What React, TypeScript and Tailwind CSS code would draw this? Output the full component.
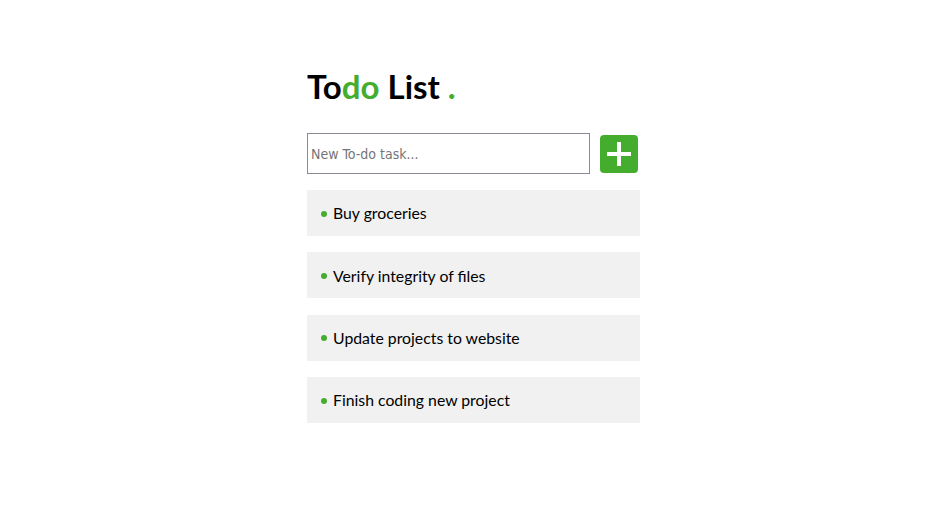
import React from 'react';

const tasks = [
  'Buy groceries',
  'Verify integrity of files',
  'Update projects to website',
  'Finish coding new project',
];

export default function App() {
  const [text, setText] = React.useState('');

  return (
    <div className="min-h-[529px] w-full bg-white font-['Lato',sans-serif]">
      <div className="mx-auto w-[333px] pt-[64px] translate-x-[4px]">
        <h1 className="text-[33px] leading-[44px] font-bold text-black">
          To<span className="text-[#44ad2e]">do</span> List <span className="text-[#44ad2e]">.</span>
        </h1>
        <div className="mt-[25px] flex items-center">
          <input
            type="text"
            value={text}
            onChange={e => setText(e.target.value)}
            placeholder="New To-do task..."
            className="w-[283px] h-[41px] border border-[#8a8a96] px-[3px] text-[14px] font-['DejaVu_Sans_Condensed','DejaVu_Sans',sans-serif] text-black placeholder:text-[#757575] outline-none"
          />
          <button className="ml-[10px] mt-[1px] w-[38px] h-[38px] rounded-[4px] bg-[#44ad2e] flex items-center justify-center">
            <svg width="28" height="28" viewBox="0 0 28 28">
              <path d="M14 2v24M2 14h24" stroke="white" strokeWidth="4" />
            </svg>
          </button>
        </div>
        <ul className="mt-[16px] flex flex-col gap-[16.4px]">
          {tasks.map(t => (
            <li key={t} className="h-[46px] bg-[#f1f1f1] flex items-center pl-[14px] text-[15.8px] text-black">
              <span className="w-[6px] h-[6px] rounded-full bg-[#44ad2e] mr-[6px] mt-[1px]" />
              {t}
            </li>
          ))}
        </ul>
      </div>
    </div>
  );
}
